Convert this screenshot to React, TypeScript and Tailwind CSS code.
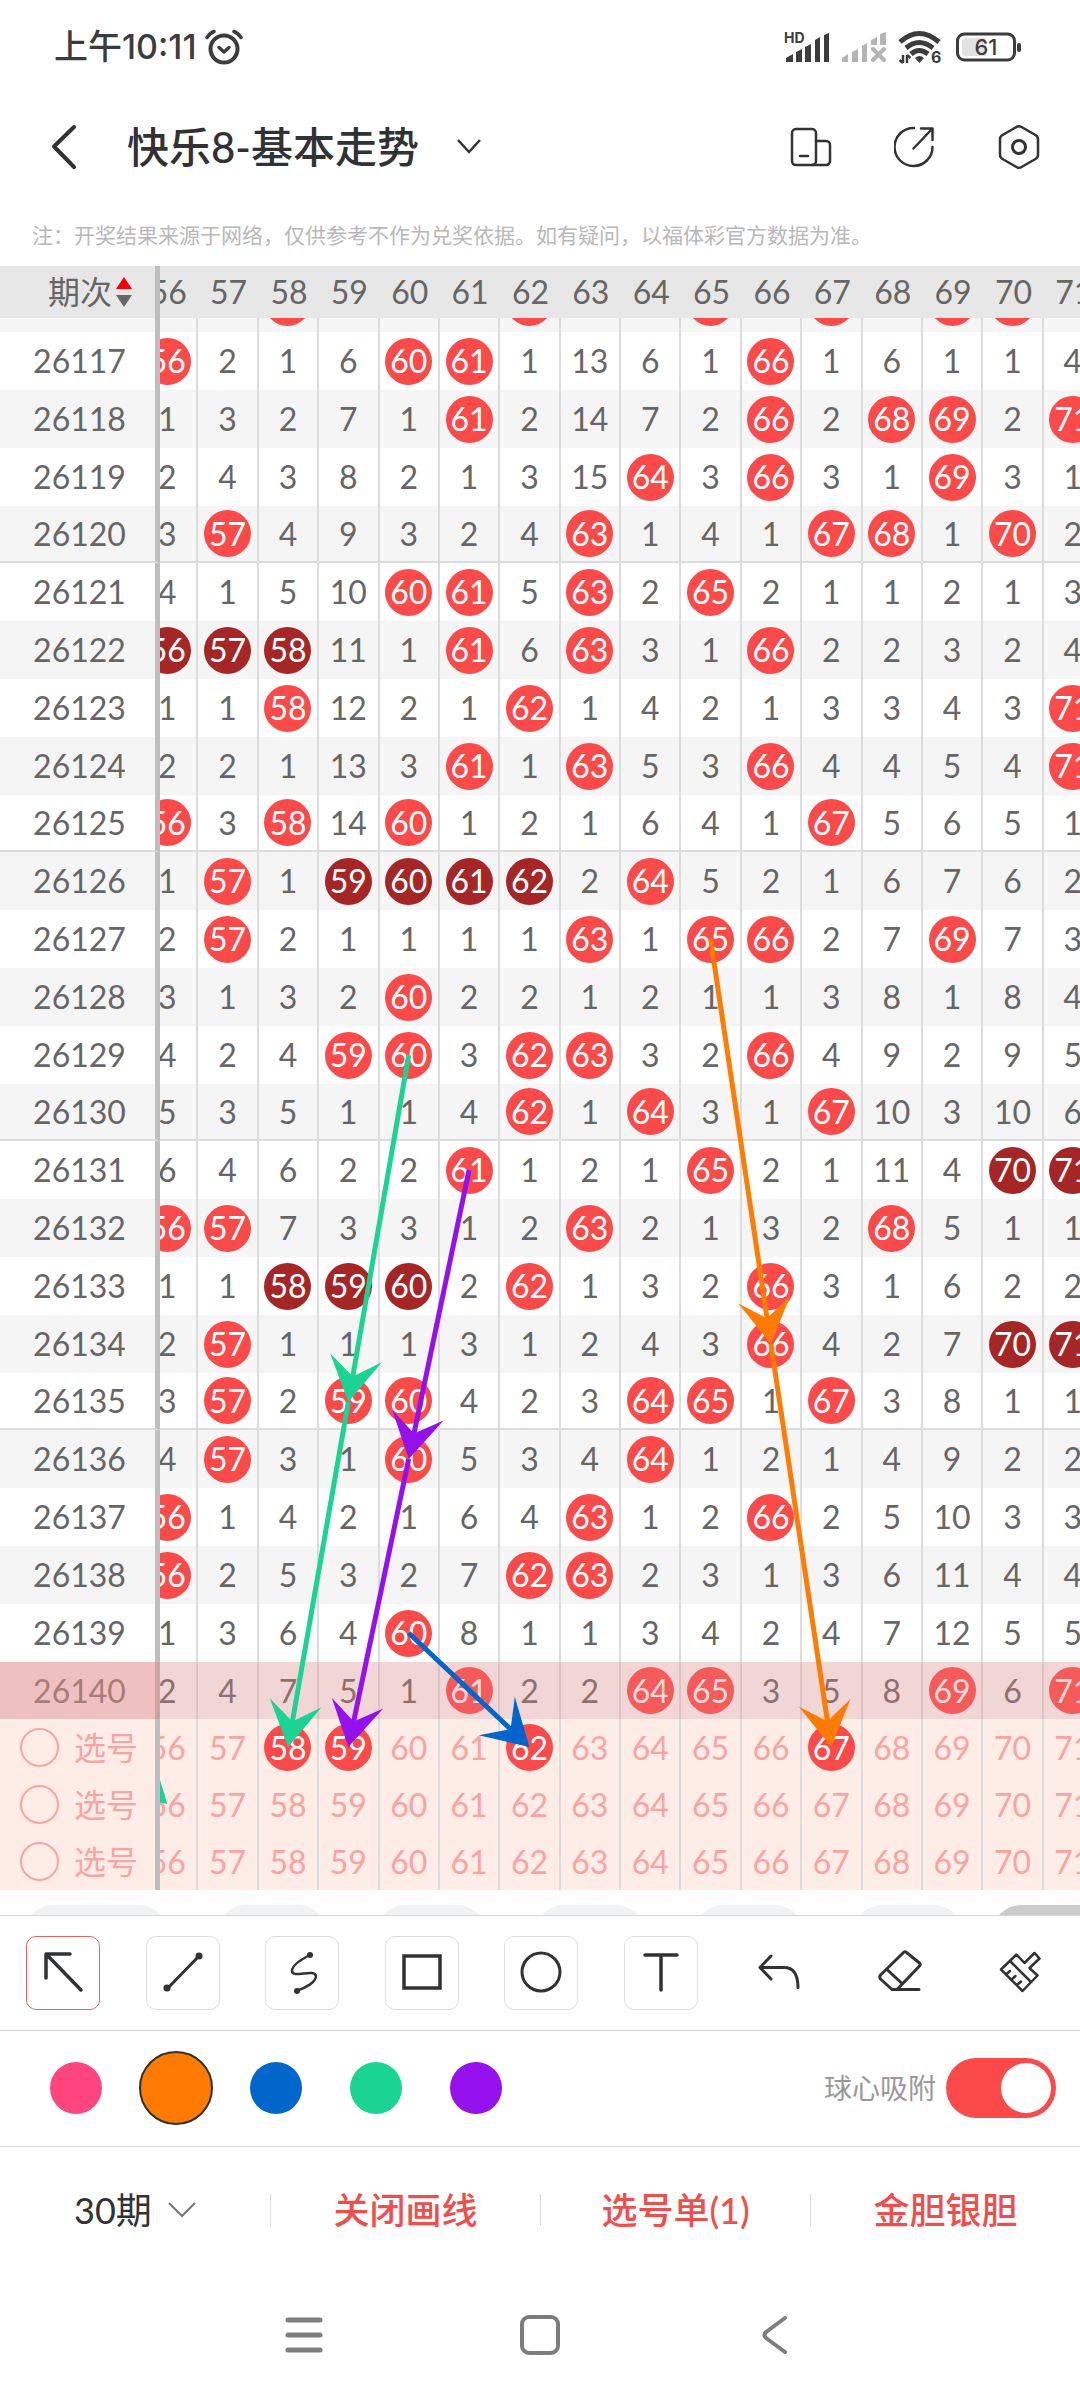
import React, { useLayoutEffect, useRef, useState } from 'react';

const FIRST_NUM = 56;
const columns = Array.from({ length: 16 }, (_, i) => FIRST_NUM + i);

type Row = { issue: number; cells: number[]; dark?: number[] };

// balls of the draw before the first full row, only their lower edge shows
const previousBalls = [58, 62, 65, 67, 69, 70];

// values of 56 and up are drawn balls, smaller ones count the draws missed
const rows: Row[] = [
  { issue: 26117, cells: [56, 2, 1, 6, 60, 61, 1, 13, 6, 1, 66, 1, 6, 1, 1, 4] },
  { issue: 26118, cells: [1, 3, 2, 7, 1, 61, 2, 14, 7, 2, 66, 2, 68, 69, 2, 71] },
  { issue: 26119, cells: [2, 4, 3, 8, 2, 1, 3, 15, 64, 3, 66, 3, 1, 69, 3, 1] },
  { issue: 26120, cells: [3, 57, 4, 9, 3, 2, 4, 63, 1, 4, 1, 67, 68, 1, 70, 2] },
  { issue: 26121, cells: [4, 1, 5, 10, 60, 61, 5, 63, 2, 65, 2, 1, 1, 2, 1, 3] },
  { issue: 26122, cells: [56, 57, 58, 11, 1, 61, 6, 63, 3, 1, 66, 2, 2, 3, 2, 4], dark: [56, 57, 58] },
  { issue: 26123, cells: [1, 1, 58, 12, 2, 1, 62, 1, 4, 2, 1, 3, 3, 4, 3, 71] },
  { issue: 26124, cells: [2, 2, 1, 13, 3, 61, 1, 63, 5, 3, 66, 4, 4, 5, 4, 71] },
  { issue: 26125, cells: [56, 3, 58, 14, 60, 1, 2, 1, 6, 4, 1, 67, 5, 6, 5, 1] },
  { issue: 26126, cells: [1, 57, 1, 59, 60, 61, 62, 2, 64, 5, 2, 1, 6, 7, 6, 2], dark: [59, 60, 61, 62] },
  { issue: 26127, cells: [2, 57, 2, 1, 1, 1, 1, 63, 1, 65, 66, 2, 7, 69, 7, 3] },
  { issue: 26128, cells: [3, 1, 3, 2, 60, 2, 2, 1, 2, 1, 1, 3, 8, 1, 8, 4] },
  { issue: 26129, cells: [4, 2, 4, 59, 60, 3, 62, 63, 3, 2, 66, 4, 9, 2, 9, 5] },
  { issue: 26130, cells: [5, 3, 5, 1, 1, 4, 62, 1, 64, 3, 1, 67, 10, 3, 10, 6] },
  { issue: 26131, cells: [6, 4, 6, 2, 2, 61, 1, 2, 1, 65, 2, 1, 11, 4, 70, 71], dark: [70, 71] },
  { issue: 26132, cells: [56, 57, 7, 3, 3, 1, 2, 63, 2, 1, 3, 2, 68, 5, 1, 1] },
  { issue: 26133, cells: [1, 1, 58, 59, 60, 2, 62, 1, 3, 2, 66, 3, 1, 6, 2, 2], dark: [58, 59, 60] },
  { issue: 26134, cells: [2, 57, 1, 1, 1, 3, 1, 2, 4, 3, 66, 4, 2, 7, 70, 71], dark: [70, 71] },
  { issue: 26135, cells: [3, 57, 2, 59, 60, 4, 2, 3, 64, 65, 1, 67, 3, 8, 1, 1] },
  { issue: 26136, cells: [4, 57, 3, 1, 60, 5, 3, 4, 64, 1, 2, 1, 4, 9, 2, 2] },
  { issue: 26137, cells: [56, 1, 4, 2, 1, 6, 4, 63, 1, 2, 66, 2, 5, 10, 3, 3] },
  { issue: 26138, cells: [56, 2, 5, 3, 2, 7, 62, 63, 2, 3, 1, 3, 6, 11, 4, 4] },
  { issue: 26139, cells: [1, 3, 6, 4, 60, 8, 1, 1, 3, 4, 2, 4, 7, 12, 5, 5] },
  { issue: 26140, cells: [2, 4, 7, 5, 1, 61, 2, 2, 64, 65, 3, 5, 8, 69, 6, 71] },
];

const LATEST = 26140;

// [number, issue] at both ends; issues past the latest are the pick rows
const arrows: { color: string; from: [number, number]; to: [number, number] }[] = [
  { color: '#1bd494', from: [60, 26129], to: [59, 26135] },
  { color: '#1bd494', from: [59, 26135], to: [58, 26141] },
  { color: '#1bd494', from: [54, 26140], to: [56, 26142] },
  { color: '#9410ec', from: [61, 26131], to: [60, 26136] },
  { color: '#9410ec', from: [60, 26136], to: [59, 26141] },
  { color: '#0066cb', from: [60, 26139], to: [62, 26141] },
  { color: '#ff7b02', from: [65, 26127], to: [66, 26134] },
  { color: '#ff7b02', from: [66, 26134], to: [67, 26141] },
];

const LABEL_W = 160;
const COL_W = 966 / 16;
// header plus the sliver of the previous draw, less the hidden part of that row
const TOP = 52 + 14 - 58;

function cellCenter([num, issue]: [number, number]) {
  const i = issue - 26116;
  const x = LABEL_W + (num - FIRST_NUM + 0.5) * COL_W - 1;
  // five rows make 289px, pick rows are 57px each
  const y = i < 25
    ? TOP + Math.floor(i / 5) * 289 + (i % 5) * 58 + 29
    : TOP + 5 * 289 + (i - 25) * 57 + 28;
  return { x, y };
}

function Arrow({ color, from, to }: { color: string; from: [number, number]; to: [number, number] }) {
  const a = cellCenter(from);
  const b = cellCenter(to);
  const angle = Math.atan2(b.y - a.y, b.x - a.x);
  const at = (len: number, turn: number) =>
    `${b.x - len * Math.cos(angle + turn)},${b.y - len * Math.sin(angle + turn)}`;
  return (
    <g>
      <line x1={a.x} y1={a.y} x2={b.x - 24 * Math.cos(angle)} y2={b.y - 24 * Math.sin(angle)} stroke={color} strokeWidth="5" />
      <polygon points={`${b.x},${b.y} ${at(52, 0.53)} ${at(26, 0)} ${at(52, -0.53)}`} fill={color} />
    </g>
  );
}

function StatusBar() {
  return (
    <div className="h-[94px] shrink-0 flex items-center justify-between pl-[54px] pr-[58px] text-[#3c3c3c]">
      <div className="flex items-center gap-2">
        <span className="text-[34px] leading-[40px] font-medium font-['Inter','Noto_Sans_CJK_SC',sans-serif]">上午10:11</span>
        <svg width="38" height="36" viewBox="0 0 38 36" fill="none" stroke="currentColor" strokeLinecap="round">
          <circle cx="19" cy="20" r="13.5" strokeWidth="4" />
          <path d="M14 18.5l5 4.5 5-4.5" strokeWidth="3.5" strokeLinejoin="round" />
          <path d="M2 8.5Q5 4 9 2.5M36 8.5Q33 4 29 2.5" strokeWidth="3.5" />
        </svg>
      </div>
      <div className="flex items-center gap-3">
        <svg className="overflow-visible" width="46" height="32" viewBox="0 0 46 32" fill="currentColor">
          <text x="0" y="12" fontSize="14" fontWeight="700" fontFamily="Inter, sans-serif">HD</text>
          <path d="M2 27l7-4v8H2zM12 21l6-3v13h-6zM21 16l6-3v18h-6zM31 9l5-3v25h-5zM40 4l5-2v29h-5z" />
        </svg>
        <svg width="44" height="32" viewBox="0 0 44 32" fill="#b4b4b4">
          <path d="M0 27l6-4v8H0zM10 21l6-3v13h-6zM20 15l5-3v19h-5zM29 9l6-3v8h-6zM38 3l6-2v13h-6z" />
          <path d="M31 18l11 11M42 18L31 29" stroke="#b4b4b4" strokeWidth="4" strokeLinecap="round" />
        </svg>
        <svg className="overflow-visible" width="44" height="34" viewBox="0 0 44 34" fill="none" stroke="currentColor">
          <path d="M2 12Q21-5 41 12" strokeWidth="5" />
          <path d="M8 18Q21 7 35 18" strokeWidth="5" />
          <path d="M13 24Q21 17 30 24" strokeWidth="5" />
          <path d="M17 28q4.500-4 9 0l-4.500 5z" fill="currentColor" stroke="none" />
          <path d="M5 25v8M1.500 30L5 33M9 33v-8M12.500 28L9 25" strokeWidth="2.500" />
          <text x="33" y="33" fontSize="16" fontWeight="700" fill="currentColor" stroke="none" fontFamily="Inter, sans-serif">6</text>
        </svg>
        <svg width="68" height="32" viewBox="0 0 68 32" fill="none">
          <rect x="3.500" y="3" width="57" height="26" rx="7" stroke="currentColor" strokeWidth="3" />
          <path d="M12 7h20v18H12a4 4 0 0 1-4-4V11a4 4 0 0 1 4-4z" fill="#e2e2e2" />
          <rect x="63" y="12" width="4" height="9" rx="2" fill="currentColor" />
          <text x="32" y="24" textAnchor="middle" fontSize="22" fontWeight="500" fill="currentColor" fontFamily="Inter, sans-serif">61</text>
        </svg>
      </div>
    </div>
  );
}

function TitleBar() {
  return (
    <header className="h-[106px] shrink-0 flex items-center justify-between pl-[50px] pr-10 text-[#303234]">
      <div className="flex items-center">
        <button aria-label="返回" className="w-[77px]">
          <svg width="28" height="46" viewBox="0 0 28 46" fill="none" stroke="currentColor" strokeWidth="4" strokeLinecap="round" strokeLinejoin="round">
            <path d="M24 3L4 22.500 24 43" />
          </svg>
        </button>
        <button aria-haspopup="listbox" className="flex items-center gap-[38px]">
          <h1 className="text-[42px] leading-[56px] font-medium">快乐8-基本走势</h1>
          <svg width="24" height="16" viewBox="0 0 24 16" fill="none" stroke="currentColor" strokeWidth="2.500">
            <path d="M1 1l11 12L23 1" />
          </svg>
        </button>
      </div>
      <div className="flex items-center gap-[62px]">
        <button aria-label="横竖屏">
          <svg width="42" height="46" viewBox="0 0 42 46" fill="none" stroke="currentColor" strokeWidth="2.500" strokeLinecap="round">
            <rect x="2" y="5" width="24" height="36" rx="4" />
            <path d="M26 17h10a4 4 0 0 1 4 4v16a4 4 0 0 1-4 4H22M10 32h8" />
          </svg>
        </button>
        <button aria-label="分享">
          <svg width="42" height="46" viewBox="0 0 42 46" fill="none" stroke="currentColor" strokeWidth="2.500" strokeLinecap="round" strokeLinejoin="round">
            <path d="M20 4a19 19 0 1 0 18.500 19" />
            <path d="M19.500 24.500L38 5M27 4.500h11.500V16" />
          </svg>
        </button>
        <button aria-label="设置">
          <svg width="42" height="46" viewBox="0 0 42 46" fill="none" stroke="currentColor" strokeWidth="2.500" strokeLinejoin="round">
            <path d="M18.500 3q2.500-1.500 5 0l14 8q2.500 1.500 2.500 4v16q0 2.500-2.500 4l-14 8q-2.500 1.500-5 0l-14-8Q2 33.500 2 31V15q0-2.500 2.500-4z" />
            <circle cx="21" cy="23" r="6.500" strokeWidth="3" />
          </svg>
        </button>
      </div>
    </header>
  );
}

function TrendTable() {
  const scroller = useRef<HTMLDivElement>(null);
  const [picked, setPicked] = useState<Set<string>>(new Set(['1-58', '1-59', '1-62', '1-67']));

  useLayoutEffect(() => {
    if (scroller.current) scroller.current.scrollLeft = 22;
  }, []);

  const togglePick = (key: string) => {
    setPicked(prev => {
      const next = new Set(prev);
      if (next.has(key)) next.delete(key);
      else next.add(key);
      return next;
    });
  };

  const cellClass = (issue: number) => {
    if (issue === LATEST) return 'bg-[#f2d6d6] border-[#dec3c3] text-[#8f7070]';
    return `${issue % 2 ? 'bg-white' : 'bg-[#f5f5f5]'} border-[#dcdcdc] text-[#666]`;
  };

  const ballClass = (row: Row, n: number) => {
    if (row.issue === LATEST) return 'bg-[#f55b5b] text-[#f9dada]';
    return row.dark?.includes(n) ? 'bg-[#a52627] text-white' : 'bg-[#fa4a4a] text-white';
  };

  return (
    <div ref={scroller} className="flex-1 min-h-0 overflow-auto [scrollbar-width:none]">
      <div className="relative w-[1126px]">
        <table className="w-full table-fixed border-separate border-spacing-0 text-[32px] leading-[40px] text-center">
          <thead>
            <tr className="h-[52px] text-[#666]">
              <th scope="col" className="w-[160px] sticky left-0 top-0 z-30 p-0 bg-[#e7e7e7] border-r-[5px] border-[#bebebe] font-normal">
                <button className="flex items-center gap-1 ml-12">
                  期次
                  <svg width="16" height="32" viewBox="0 0 16 32">
                    <path d="M8 1l8 12H0z" fill="#fb0000" />
                    <path d="M8 31L0 19h16z" fill="#666" />
                  </svg>
                </button>
              </th>
              {columns.map(n => (
                <th key={n} scope="col" className="sticky top-0 z-20 p-0 bg-[#e7e7e7] font-normal">{n}</th>
              ))}
            </tr>
          </thead>
          <tbody>
            <tr aria-hidden="true">
              <td className="sticky left-0 z-20 p-0 bg-[#f5f5f5] border-r-[5px] border-[#bebebe]"></td>
              {columns.map(n => (
                <td key={n} className="p-0 bg-[#f5f5f5] border-r-2 border-[#dcdcdc]">
                  <div className="h-[14px] pb-[6px] flex items-end justify-center overflow-hidden">
                    {previousBalls.includes(n) && <span className="size-[47px] shrink-0 rounded-full bg-[#fa4a4a]"></span>}
                  </div>
                </td>
              ))}
            </tr>
            {rows.map(row => {
              const groupEnd = row.issue % 5 === 0 && row.issue !== LATEST;
              return (
                <tr key={row.issue} className={row.issue % 5 === 0 ? 'h-[57px]' : 'h-[58px]'}>
                  <th scope="row" className={`sticky left-0 z-20 p-0 pl-1 font-normal ${groupEnd ? 'border-b-2 border-b-[#dcdcdc]' : ''} ${
                    row.issue === LATEST
                      ? 'bg-[#efc0c0] text-[#a97b7b] border-r-[5px] border-r-[#c9a5a5]'
                      : `${row.issue % 2 ? 'bg-white' : 'bg-[#f5f5f5]'} text-[#666] border-r-[5px] border-r-[#bebebe]`
                  }`}>
                    {row.issue}
                  </th>
                  {row.cells.map((n, i) => (
                    <td key={i} className={`p-0 border-r-2 ${groupEnd ? 'border-b-2' : ''} ${cellClass(row.issue)}`}>
                      {n >= FIRST_NUM ? (
                        <span className={`flex items-center justify-center size-[47px] mx-auto rounded-full ${ballClass(row, n)}`}>{n}</span>
                      ) : n}
                    </td>
                  ))}
                </tr>
              );
            })}
            {[1, 2, 3].map(line => (
              <tr key={line} className="h-[57px] text-[#f9a3a3]">
                <th scope="row" className="sticky left-0 z-20 p-0 bg-[#feede7] border-r-[5px] border-[#bebebe] font-normal">
                  <label className="flex items-center gap-[15px] pl-5">
                    <input type="checkbox" className="appearance-none size-[39px] rounded-full border-2 border-[#f9a3a3] checked:bg-[#fa4a4a]" />
                    选号
                  </label>
                </th>
                {columns.map(n => {
                  const key = `${line}-${n}`;
                  return (
                    <td key={n} className="p-0 bg-[#feede7] border-r-2 border-[#dcdcdc]">
                      <button
                        onClick={() => togglePick(key)}
                        aria-pressed={picked.has(key)}
                        className={`flex items-center justify-center size-[47px] mx-auto rounded-full ${picked.has(key) ? 'bg-[#fa4a4a] text-white' : ''}`}
                      >
                        {n}
                      </button>
                    </td>
                  );
                })}
              </tr>
            ))}
          </tbody>
        </table>
        <svg className="absolute left-0 top-0 z-10 pointer-events-none" width="1126" height="1624" viewBox="0 0 1126 1624" aria-hidden="true">
          {arrows.map((a, i) => <Arrow key={i} {...a} />)}
        </svg>
      </div>
    </div>
  );
}

const tools = [
  { id: 'arrow', label: '箭头', boxed: true, art: <path d="M5 28V4h24M6 5l34 35" strokeWidth="3.500" /> },
  {
    id: 'line', label: '直线', boxed: true, art: (
      <>
        <path d="M6 39L38 6" />
        <circle cx="6" cy="38" r="3.500" fill="currentColor" stroke="none" />
        <circle cx="38" cy="6" r="3.500" fill="currentColor" stroke="none" />
      </>
    ),
  },
  {
    id: 'curve', label: '曲线', boxed: true, art: (
      <>
        <path d="M30 5C22 9 12 15 12 21c0 8 23-3 24 5 0 6-10 12-20 15" strokeWidth="2.500" />
        <circle cx="30" cy="5" r="3" fill="currentColor" stroke="none" />
        <circle cx="17" cy="41" r="3" fill="currentColor" stroke="none" />
      </>
    ),
  },
  { id: 'rect', label: '矩形', boxed: true, art: <rect x="4" y="6" width="36" height="32" strokeLinejoin="miter" strokeWidth="3.500" /> },
  { id: 'circle', label: '圆形', boxed: true, art: <circle cx="22" cy="22" r="19" /> },
  { id: 'text', label: '文字', boxed: true, art: <path d="M6 5h32M22 5v35" strokeWidth="3.500" /> },
  { id: 'undo', label: '撤销', boxed: false, art: <path d="M13 6L2 17.500 13 29M2 17.500h24c10 0 14 7 14 20" /> },
  {
    id: 'eraser', label: '橡皮', boxed: false, art: (
      <path d="M25.500 2.500q1.500-1.500 3 0L41.500 13q1.500 1.500 0 3L20.500 38q-1.500 1.500-3 1.500H14L2.500 29q-1.500-2 0-4zM9 19.500L23.500 33M14 39.500h27" />
    ),
  },
  {
    id: 'clear', label: '清空', boxed: false, art: (
      <path d="M19.500 4.500l8 8.500 10-10 5 5.500-10 9.500 8 7.500L25.500 41 4 19.500zM13 11l21 21M9 24.500l4-3.500M14.500 29.500l4-3.500M20 35l4-3.500" strokeWidth="2.500" />
    ),
  },
];

const colors = [
  { name: '粉', cls: 'bg-[#ff457f]' },
  { name: '橙', cls: 'bg-[#ff7b02]' },
  { name: '蓝', cls: 'bg-[#0066cb]' },
  { name: '绿', cls: 'bg-[#1bd494]' },
  { name: '紫', cls: 'bg-[#9410ec]' },
];

function DrawPanel() {
  const [tool, setTool] = useState('arrow');
  const [color, setColor] = useState('橙');
  const [snap, setSnap] = useState(true);

  return (
    <div className="shrink-0 text-[#303234]">
      <div className="h-[115px] border-t border-[#d6d6d6] flex items-center justify-between pl-[26px] pr-6 pb-px">
        {tools.map(t => (
          <button
            key={t.id}
            aria-label={t.label}
            onClick={() => setTool(t.id)}
            className={`size-[74px] flex items-center justify-center rounded-[10px] ${
              t.boxed ? (tool === t.id ? 'border border-[#e96363]' : 'border border-[#dcdcdc]') : ''
            }`}
          >
            <svg width="44" height="45" viewBox="0 0 44 45" fill="none" stroke="currentColor" strokeWidth="3" strokeLinecap="round" strokeLinejoin="round">
              {t.art}
            </svg>
          </button>
        ))}
      </div>
      <div className="h-[116px] border-t border-[#d6d6d6] flex items-center justify-between pl-[26px] pr-6 pb-px">
        <div className="flex items-center">
          {colors.map(c => (
            <label key={c.name} className="w-[100px] flex justify-center">
              <input
                type="radio"
                name="color"
                aria-label={c.name}
                checked={color === c.name}
                onChange={() => setColor(c.name)}
                className={`appearance-none size-[52px] rounded-full checked:size-[74px] checked:border-2 checked:border-[#303030] ${c.cls}`}
              />
            </label>
          ))}
        </div>
        <label className="flex items-center gap-[10px] text-[28px] leading-[40px] text-[#999]">
          球心吸附
          <input
            type="checkbox"
            role="switch"
            checked={snap}
            onChange={e => setSnap(e.target.checked)}
            className="appearance-none w-[110px] h-[60px] p-[5px] rounded-full bg-[#ccc] checked:bg-[#fa4a4a] flex checked:justify-end before:size-[50px] before:rounded-full before:bg-white"
          />
        </label>
      </div>
    </div>
  );
}

function BottomBar() {
  return (
    <div className="h-[128px] shrink-0 border-t border-[#d6d6d6] grid grid-cols-4 items-center pb-px text-[36px] leading-[48px] text-[#ee4f4c] font-medium">
      <label className="flex items-center justify-center gap-4 text-[#303234] font-normal">
        <select aria-label="期数" className="appearance-none bg-transparent w-[78px]">
          <option>30期</option>
        </select>
        <svg width="28" height="16" viewBox="0 0 28 16" fill="none" stroke="#777" strokeWidth="2">
          <path d="M1 1l13 13L27 1" />
        </svg>
      </label>
      {['关闭画线', '选号单(1)', '金胆银胆'].map(text => (
        <div key={text} className="flex items-center">
          <span className="w-px h-8 bg-[#dcdcdc]"></span>
          <button className="flex-1 whitespace-nowrap">{text}</button>
        </div>
      ))}
    </div>
  );
}

function NavBar() {
  return (
    <nav className="h-[126px] shrink-0 flex items-center justify-center gap-[196px] pb-1 text-[#7d7d7d]">
      <button aria-label="最近任务">
        <svg width="40" height="40" viewBox="0 0 40 40" stroke="currentColor" strokeWidth="5" strokeLinecap="round">
          <path d="M4 5h32M4 20h32M4 35h32" />
        </svg>
      </button>
      <button aria-label="主页">
        <svg width="40" height="40" viewBox="0 0 40 40" fill="none" stroke="currentColor" strokeWidth="4">
          <rect x="2" y="2" width="36" height="36" rx="7" />
        </svg>
      </button>
      <button aria-label="返回上一页">
        <svg width="40" height="40" viewBox="0 0 40 40" fill="none" stroke="currentColor" strokeWidth="4" strokeLinecap="round" strokeLinejoin="round">
          <path d="M29 3L10 17q-3 3 0 6l19 14" />
        </svg>
      </button>
    </nav>
  );
}

export default function App() {
  return (
    <div className="h-screen flex flex-col overflow-hidden bg-white font-['Lato','Noto_Sans_CJK_SC',sans-serif]">
      <StatusBar />
      <TitleBar />
      <p className="h-[66px] shrink-0 flex items-center pt-1 pl-8 text-[21px] leading-[28px] text-[#b8b8b8] whitespace-nowrap">
        注：开奖结果来源于网络，仅供参考不作为兑奖依据。如有疑问，以福体彩官方数据为准。
      </p>
      <TrendTable />
      {/* tab pills, mostly covered by the drawing panel */}
      <div className="h-[25px] shrink-0 pt-[15px] pl-6 flex gap-[49px] overflow-hidden" aria-hidden="true">
        <span className="w-36 h-[58px] shrink-0 rounded-full bg-[#f1f2f4]"></span>
        {[1, 2, 3, 4, 5].map(i => (
          <span key={i} className="w-[110px] h-[58px] shrink-0 rounded-full bg-[#f1f2f4]"></span>
        ))}
        <span className="w-36 h-[58px] shrink-0 -ml-5 rounded-full bg-[#ccc]"></span>
      </div>
      <DrawPanel />
      <BottomBar />
      <NavBar />
    </div>
  );
}
